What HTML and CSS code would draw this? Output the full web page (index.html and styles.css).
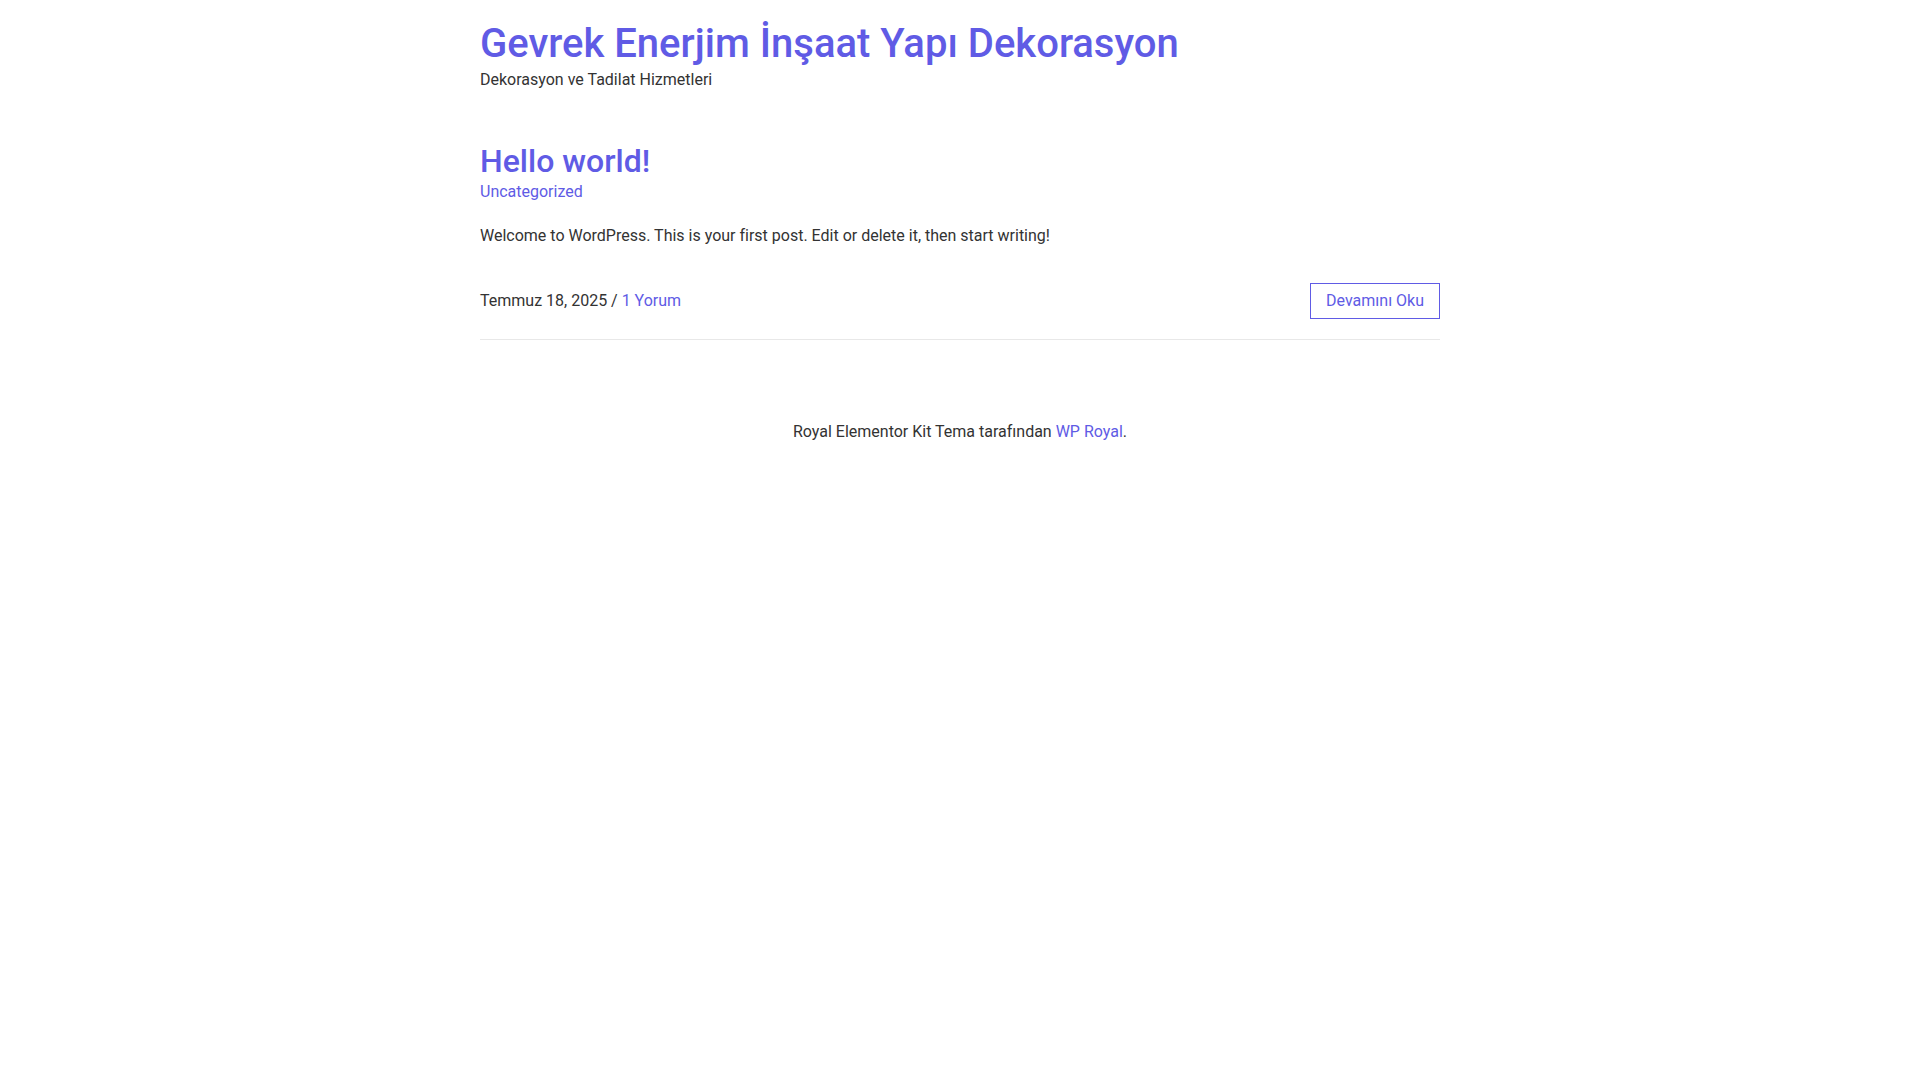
FILE: index.html
```html
<!DOCTYPE html>
<html lang="tr">
<head>
<meta charset="utf-8">
<title>Gevrek Enerjim İnşaat Yapı Dekorasyon</title>
<link rel="stylesheet" href="styles.css">
</head>
<body>
<div class="page">
  <header class="site-header">
    <h1 class="site-title"><a href="#">Gevrek Enerjim İnşaat Yapı Dekorasyon</a></h1>
    <p class="site-description">Dekorasyon ve Tadilat Hizmetleri</p>
  </header>
  <main class="site-main">
    <article class="post">
      <h2 class="post-title"><a href="#">Hello world!</a></h2>
      <div class="post-categories"><a href="#">Uncategorized</a></div>
      <div class="post-content"><p>Welcome to WordPress. This is your first post. Edit or delete it, then start writing!</p></div>
      <footer class="post-footer">
        <div class="post-meta">Temmuz 18, 2025 / <a href="#">1 Yorum</a></div>
        <a class="read-more" href="#">Devamını Oku</a>
      </footer>
    </article>
  </main>
  <footer class="site-footer">
    <p>Royal Elementor Kit Tema tarafından <a href="#">WP Royal</a>.</p>
  </footer>
</div>
</body>
</html>
```
FILE: styles.css
```css
html, body {
  margin: 0;
  padding: 0;
  background: #ffffff;
}
body {
  font-family: Roboto, "Liberation Sans", sans-serif;
  font-size: 16px;
  line-height: 1.5;
  color: #333333;
}
a {
  color: #605be5;
  text-decoration: none;
}
.page {
  width: 960px;
  margin: 0 auto;
}
.site-header {
  padding-top: 20px;
}
.site-title {
  margin: 0;
  font-size: 40px;
  font-weight: 500;
  line-height: 1.2;
}
.site-description {
  margin: 0;
  font-size: 16px;
  line-height: 1.5;
}
.site-main {
  padding-top: 50px;
}
.post {
  border-bottom: 1px solid #e8e8e8;
  padding-bottom: 20px;
}
.post-title {
  margin: 0;
  font-size: 32px;
  font-weight: 500;
  line-height: 1.2;
}
.post-categories {
  line-height: 1.5;
}
.post-content p {
  margin: 20px 0 0;
}
.post-footer {
  display: flex;
  justify-content: space-between;
  align-items: center;
  margin-top: 35px;
}
.read-more {
  display: inline-block;
  border: 1px solid #605be5;
  padding: 5px 15px;
  line-height: 1.5;
}
.site-footer {
  text-align: center;
  padding-top: 80px;
}
.site-footer p {
  margin: 0;
}
```
